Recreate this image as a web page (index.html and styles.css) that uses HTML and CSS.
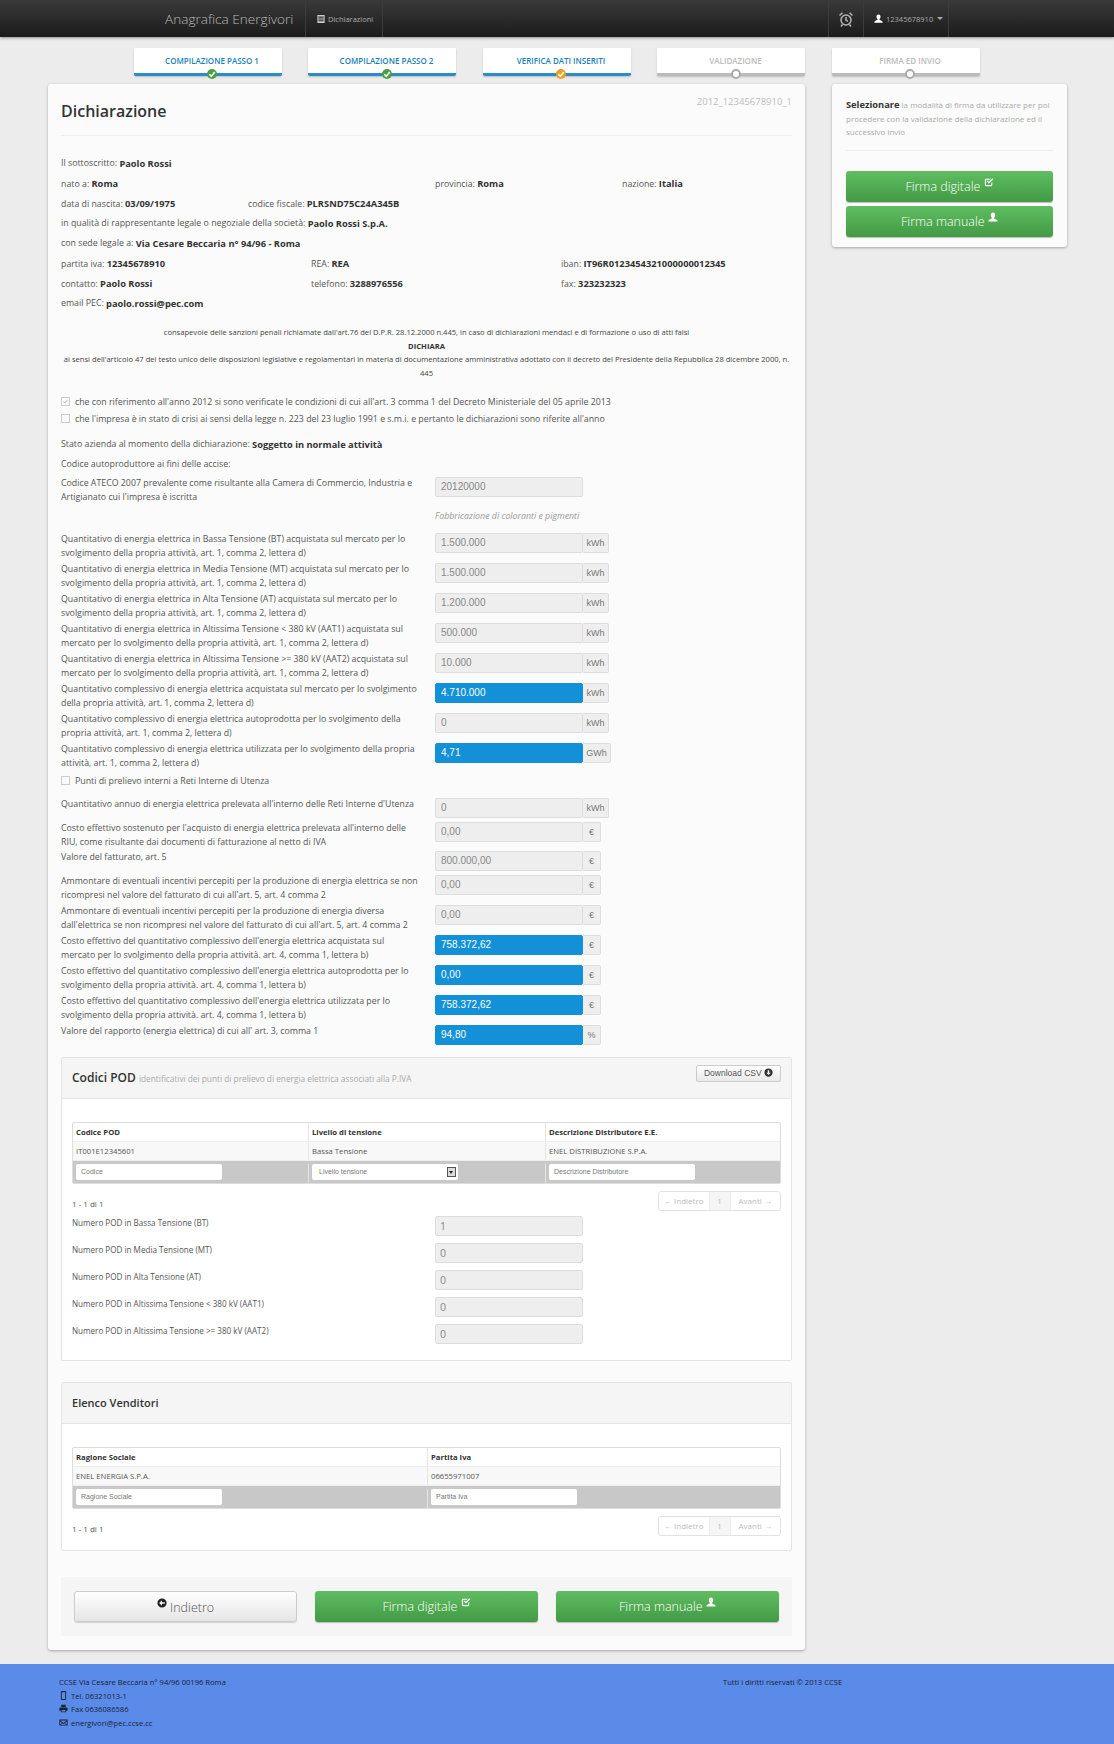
FILE: index.html
```html
<!DOCTYPE html>
<html lang="it">
<head>
    <meta charset="UTF-8">
    <title>Anagrafica Energivori</title>
    <link rel="stylesheet" href="styles.css">
</head>
<body>
    <svg class="sprite" xmlns="http://www.w3.org/2000/svg">
        <symbol id="i-user" viewBox="0 0 12 12"><path d="M6 0.5c1.7 0 2.7 1.2 2.7 3 0 1.4-.6 2.6-1.4 3.2v1l3.2 1.5c.6.3.9.7.9 1.3v1H.5v-1c0-.6.3-1 .9-1.3l3.2-1.5v-1C3.900 6.100 3.300 4.900 3.300 3.500c0-1.800 1-3 2.700-3z"/></symbol>
        <symbol id="i-check" viewBox="0 0 12 12"><path d="M2.500 2h5.500l-1.200 1.200H3a.5.500 0 0 0-.5.500v5.300c0 .3.200.5.500.5h5.300c.3 0 .5-.2.5-.5V7.200L10 6v3.300c0 1-.7 1.700-1.700 1.700H2.700C1.700 11 1 10.300 1 9.300V3.700C1 2.700 1.700 2 2.500 2z"/><path d="M3.400 5.400l1.100-1.100 1.400 1.400L10.100 1.500l1.100 1.100L5.900 7.900z"/></symbol>
        <symbol id="i-down" viewBox="0 0 12 12"><path fill-rule="evenodd" d="M6 .5a5.500 5.500 0 1 1 0 11 5.500 5.500 0 0 1 0-11zM5 3v3.200H3.200L6 9.200l2.800-3H7V3z"/></symbol>
        <symbol id="i-back" viewBox="0 0 12 12"><path fill-rule="evenodd" d="M6 .5a5.500 5.500 0 1 1 0 11 5.500 5.500 0 0 1 0-11zM2.600 6L6 9.200V7h3.400V5H6V2.800z"/></symbol>
        <symbol id="i-phone" viewBox="0 0 8 12"><path fill-rule="evenodd" d="M1.500 0h5c.6 0 1 .4 1 1v10c0 .6-.4 1-1 1h-5c-.6 0-1-.4-1-1V1c0-.6.4-1 1-1zM1.700 1.500v9h4.600v-9z"/></symbol>
        <symbol id="i-print" viewBox="0 0 12 12"><path d="M3 1h6v3H3zM1.500 4.800h9c.5 0 1 .4 1 1V9H9.500v2h-7V9H.5V5.800c0-.6.5-1 1-1zM3.500 8v2h5V8z"/></symbol>
        <symbol id="i-mail" viewBox="0 0 12 12"><path fill-rule="evenodd" d="M.5 2h11v8H.5zM1.800 3.200L6 6.500l4.200-3.300zM1.500 4.500v4.300L4 6.500zM10.500 4.500L8 6.500l2.500 2.300zM4.800 7.100L2.300 9h7.400L7.200 7.100 6 8z"/></symbol>
        <symbol id="i-list" viewBox="0 0 10 12"><path fill-rule="evenodd" d="M.5 1h9v10h-9zM1.700 3v1.300h6.600V3zM1.700 5.300v1.300h6.600V5.300zM1.700 7.600v1.300h6.600V7.600z"/></symbol>
    </svg>

    <header class="topbar">
        <span class="brand">Anagrafica Energivori</span>
        <a class="nav-item nav-main"><svg class="ico-list"><use href="#i-list"/></svg>Dichiarazioni</a>
        <span class="nav-spacer"></span>
        <a class="nav-item nav-clock">
            <svg class="ico-clock" viewBox="0 0 16 16" fill="none" stroke="#b4b4b4" stroke-width="1.500">
                <circle cx="8" cy="9" r="5"/>
                <path d="M8 6v3.200l2 1.200M1.500 4.500L4.500 1.800M14.500 4.500L11.500 1.800M4.500 13.500l-1.500 2M11.500 13.500l1.500 2"/>
            </svg>
        </a>
        <a class="nav-item nav-user"><svg class="ico-sm ico-light"><use href="#i-user"/></svg>12345678910<span class="caret"></span></a>
    </header>

    <div class="page">
        <ul class="steps">
            <li class="step done"><span>COMPILAZIONE PASSO 1</span><i class="dot green"><svg viewBox="0 0 10 10"><path d="M2.300 5.200L4.300 7.200 7.800 3"/></svg></i></li>
            <li class="step done"><span>COMPILAZIONE PASSO 2</span><i class="dot green"><svg viewBox="0 0 10 10"><path d="M2.300 5.200L4.300 7.200 7.800 3"/></svg></i></li>
            <li class="step done active"><span>VERIFICA DATI INSERITI</span><i class="dot orange"><svg viewBox="0 0 10 10"><path d="M2.300 5.200L4.300 7.200 7.800 3"/></svg></i></li>
            <li class="step todo"><span>VALIDAZIONE</span><i class="dot empty"></i></li>
            <li class="step todo"><span>FIRMA ED INVIO</span><i class="dot empty"></i></li>
        </ul>

        <div class="columns">
            <main class="card main-card">
                <div class="title-row">
                    <h1>Dichiarazione</h1>
                    <span class="doc-code">2012_12345678910_1</span>
                </div>

                <div class="info">
                    <div class="info-row">Il sottoscritto:&nbsp;<b>Paolo Rossi</b></div>
                    <div class="info-row">
                        <span class="w-375">nato a:&nbsp;<b>Roma</b></span>
                        <span class="w-187">provincia:&nbsp;<b>Roma</b></span>
                        <span>nazione:&nbsp;<b>Italia</b></span>
                    </div>
                    <div class="info-row">
                        <span class="w-187">data di nascita:&nbsp;<b>03/09/1975</b></span>
                        <span>codice fiscale:&nbsp;<b>PLRSND75C24A345B</b></span>
                    </div>
                    <div class="info-row">in qualità di rappresentante legale o negoziale della società:&nbsp;<b>Paolo Rossi S.p.A.</b></div>
                    <div class="info-row">con sede legale a:&nbsp;<b>Via Cesare Beccaria n° 94/96 - Roma</b></div>
                    <div class="info-row">
                        <span class="w-250">partita iva:&nbsp;<b>12345678910</b></span>
                        <span class="w-250">REA:&nbsp;<b>REA</b></span>
                        <span>iban:&nbsp;<b>IT96R0123454321000000012345</b></span>
                    </div>
                    <div class="info-row">
                        <span class="w-250">contatto:&nbsp;<b>Paolo Rossi</b></span>
                        <span class="w-250">telefono:&nbsp;<b>3288976556</b></span>
                        <span>fax:&nbsp;<b>323232323</b></span>
                    </div>
                    <div class="info-row">email PEC:&nbsp;<b>paolo.rossi@pec.com</b></div>
                </div>

                <div class="notice">
                    <p>consapevole delle sanzioni penali richiamate dall'art.76 del D.P.R. 28.12.2000 n.445, in caso di dichiarazioni mendaci e di formazione o uso di atti falsi</p>
                    <p class="notice-title">DICHIARA</p>
                    <p>ai sensi dell'articolo 47 del testo unico delle disposizioni legislative e regolamentari in materia di documentazione amministrativa adottato con il decreto del Presidente della Repubblica 28 dicembre 2000, n. 445</p>
                </div>

                <label class="check-row"><span class="box checked"><svg viewBox="0 0 10 10"><path d="M2 5l2 2.200L8 2.500"/></svg></span>che con riferimento all'anno 2012 si sono verificate le condizioni di cui all'art. 3 comma 1 del Decreto Ministeriale del 05 aprile 2013</label>
                <label class="check-row"><span class="box"></span>che l'impresa è in stato di crisi ai sensi della legge n. 223 del 23 luglio 1991 e s.m.i. e pertanto le dichiarazioni sono riferite all'anno</label>

                <div class="info-row state-row">Stato azienda al momento della dichiarazione:&nbsp;<b>Soggetto in normale attività</b></div>
                <div class="info-row">Codice autoproduttore ai fini delle accise:</div>

                <div class="field ateco">
                    <span class="field-label">Codice ATECO 2007 prevalente come risultante alla Camera di Commercio, Industria e Artigianato cui l'impresa è iscritta</span>
                    <div class="control"><span class="input">20120000</span></div>
                </div>
                <p class="hint">Fabbricazione di coloranti e pigmenti</p>

                <div class="field">
                    <span class="field-label">Quantitativo di energia elettrica in Bassa Tensione (BT) acquistata sul mercato per lo svolgimento della propria attività, art. 1, comma 2, lettera d)</span>
                    <div class="control"><span class="input">1.500.000</span><span class="addon">kWh</span></div>
                </div>
                <div class="field">
                    <span class="field-label">Quantitativo di energia elettrica in Media Tensione (MT) acquistata sul mercato per lo svolgimento della propria attività, art. 1, comma 2, lettera d)</span>
                    <div class="control"><span class="input">1.500.000</span><span class="addon">kWh</span></div>
                </div>
                <div class="field">
                    <span class="field-label">Quantitativo di energia elettrica in Alta Tensione (AT) acquistata sul mercato per lo svolgimento della propria attività, art. 1, comma 2, lettera d)</span>
                    <div class="control"><span class="input">1.200.000</span><span class="addon">kWh</span></div>
                </div>
                <div class="field">
                    <span class="field-label">Quantitativo di energia elettrica in Altissima Tensione &lt; 380 kV (AAT1) acquistata sul mercato per lo svolgimento della propria attività, art. 1, comma 2, lettera d)</span>
                    <div class="control"><span class="input">500.000</span><span class="addon">kWh</span></div>
                </div>
                <div class="field">
                    <span class="field-label">Quantitativo di energia elettrica in Altissima Tensione &gt;= 380 kV (AAT2) acquistata sul mercato per lo svolgimento della propria attività, art. 1, comma 2, lettera d)</span>
                    <div class="control"><span class="input">10.000</span><span class="addon">kWh</span></div>
                </div>
                <div class="field">
                    <span class="field-label">Quantitativo complessivo di energia elettrica acquistata sul mercato per lo svolgimento della propria attività, art. 1, comma 2, lettera d)</span>
                    <div class="control"><span class="input calc">4.710.000</span><span class="addon">kWh</span></div>
                </div>
                <div class="field">
                    <span class="field-label">Quantitativo complessivo di energia elettrica autoprodotta per lo svolgimento della propria attività, art. 1, comma 2, lettera d)</span>
                    <div class="control"><span class="input">0</span><span class="addon">kWh</span></div>
                </div>
                <div class="field">
                    <span class="field-label">Quantitativo complessivo di energia elettrica utilizzata per lo svolgimento della propria attività, art. 1, comma 2, lettera d)</span>
                    <div class="control"><span class="input calc">4,71</span><span class="addon addon-wide">GWh</span></div>
                </div>

                <label class="check-row riu-row"><span class="box"></span>Punti di prelievo interni a Reti Interne di Utenza</label>

                <div class="field field-short">
                    <span class="field-label">Quantitativo annuo di energia elettrica prelevata all'interno delle Reti Interne d'Utenza</span>
                    <div class="control"><span class="input">0</span><span class="addon">kWh</span></div>
                </div>
                <div class="field field-tight">
                    <span class="field-label">Costo effettivo sostenuto per l'acquisto di energia elettrica prelevata all'interno delle RIU, come risultante dai documenti di fatturazione al netto di IVA</span>
                    <div class="control"><span class="input">0,00</span><span class="addon addon-eur">€</span></div>
                </div>
                <div class="field field-short">
                    <span class="field-label">Valore del fatturato, art. 5</span>
                    <div class="control"><span class="input">800.000,00</span><span class="addon addon-eur">€</span></div>
                </div>
                <div class="field">
                    <span class="field-label">Ammontare di eventuali incentivi percepiti per la produzione di energia elettrica se non ricompresi nel valore del fatturato di cui all'art. 5, art. 4 comma 2</span>
                    <div class="control"><span class="input">0,00</span><span class="addon addon-eur">€</span></div>
                </div>
                <div class="field">
                    <span class="field-label">Ammontare di eventuali incentivi percepiti per la produzione di energia diversa dall'elettrica se non ricompresi nel valore del fatturato di cui all'art. 5, art. 4 comma 2</span>
                    <div class="control"><span class="input">0,00</span><span class="addon addon-eur">€</span></div>
                </div>
                <div class="field">
                    <span class="field-label">Costo effettivo del quantitativo complessivo dell'energia elettrica acquistata sul mercato per lo svolgimento della propria attività. art. 4, comma 1, lettera b)</span>
                    <div class="control"><span class="input calc">758.372,62</span><span class="addon addon-eur">€</span></div>
                </div>
                <div class="field">
                    <span class="field-label">Costo effettivo del quantitativo complessivo dell'energia elettrica autoprodotta per lo svolgimento della propria attività. art. 4, comma 1, lettera b)</span>
                    <div class="control"><span class="input calc">0,00</span><span class="addon addon-eur">€</span></div>
                </div>
                <div class="field">
                    <span class="field-label">Costo effettivo del quantitativo complessivo dell'energia elettrica utilizzata per lo svolgimento della propria attività. art. 4, comma 1, lettera b)</span>
                    <div class="control"><span class="input calc">758.372,62</span><span class="addon addon-eur">€</span></div>
                </div>
                <div class="field field-last">
                    <span class="field-label">Valore del rapporto (energia elettrica) di cui all' art. 3, comma 1</span>
                    <div class="control"><span class="input calc">94,80</span><span class="addon addon-eur">%</span></div>
                </div>

                <section class="panel pod-panel">
                    <div class="panel-head">
                        <h2>Codici POD <small>identificativi dei punti di prelievo di energia elettrica associati alla P.IVA</small></h2>
                        <a class="btn-csv">Download CSV <svg class="ico-sm"><use href="#i-down"/></svg></a>
                    </div>
                    <div class="panel-body">
                        <div class="table pod-table">
                            <div class="tr th"><span>Codice POD</span><span>Livello di tensione</span><span>Descrizione Distributore E.E.</span></div>
                            <div class="tr td"><span>IT001E12345601</span><span>Bassa Tensione</span><span>ENEL DISTRIBUZIONE S.P.A.</span></div>
                            <div class="tr filter">
                                <span><em class="filter-input">Codice</em></span>
                                <span><em class="filter-input filter-select">Livello tensione<i class="select-arrow"></i></em></span>
                                <span><em class="filter-input">Descrizione Distributore</em></span>
                            </div>
                        </div>
                        <div class="pager-row">
                            <span class="count">1 - 1 di 1</span>
                            <div class="pager"><span>← Indietro</span><span class="current">1</span><span>Avanti →</span></div>
                        </div>
                        <div class="pod-fields">
                            <div class="pod-field"><span class="field-label">Numero POD in Bassa Tensione (BT)</span><span class="input input-num">1</span></div>
                            <div class="pod-field"><span class="field-label">Numero POD in Media Tensione (MT)</span><span class="input input-num">0</span></div>
                            <div class="pod-field"><span class="field-label">Numero POD in Alta Tensione (AT)</span><span class="input input-num">0</span></div>
                            <div class="pod-field"><span class="field-label">Numero POD in Altissima Tensione &lt; 380 kV (AAT1)</span><span class="input input-num">0</span></div>
                            <div class="pod-field"><span class="field-label">Numero POD in Altissima Tensione &gt;= 380 kV (AAT2)</span><span class="input input-num">0</span></div>
                        </div>
                    </div>
                </section>

                <section class="panel seller-panel">
                    <div class="panel-head">
                        <h2 class="h-small">Elenco Venditori</h2>
                    </div>
                    <div class="panel-body">
                        <div class="table seller-table">
                            <div class="tr th"><span>Ragione Sociale</span><span>Partita Iva</span></div>
                            <div class="tr td"><span>ENEL ENERGIA S.P.A.</span><span>06655971007</span></div>
                            <div class="tr filter">
                                <span><em class="filter-input">Ragione Sociale</em></span>
                                <span><em class="filter-input">Partita Iva</em></span>
                            </div>
                        </div>
                        <div class="pager-row">
                            <span class="count">1 - 1 di 1</span>
                            <div class="pager"><span>← Indietro</span><span class="current">1</span><span>Avanti →</span></div>
                        </div>
                    </div>
                </section>

                <div class="actions">
                    <a class="btn btn-grey"><svg class="ico-up"><use href="#i-back"/></svg> Indietro</a>
                    <a class="btn btn-green">Firma digitale <svg class="ico-up ico-light"><use href="#i-check"/></svg></a>
                    <a class="btn btn-green">Firma manuale <svg class="ico-up ico-light"><use href="#i-user"/></svg></a>
                </div>
            </main>

            <aside class="card side-card">
                <p class="side-text"><b>Selezionare</b> la modalità di firma da utilizzare per poi procedere con la validazione della dichiarazione ed il successivo invio</p>
                <hr>
                <a class="btn btn-green">Firma digitale <svg class="ico-up ico-light"><use href="#i-check"/></svg></a>
                <a class="btn btn-green">Firma manuale <svg class="ico-up ico-light"><use href="#i-user"/></svg></a>
            </aside>
        </div>
    </div>

    <footer class="footer">
        <div class="footer-left">
            <p>CCSE Via Cesare Beccaria n° 94/96 00196 Roma</p>
            <p><svg class="ico-foot"><use href="#i-phone"/></svg>Tel. 06321013-1</p>
            <p><svg class="ico-foot"><use href="#i-print"/></svg>Fax 0636086586</p>
            <p><svg class="ico-foot"><use href="#i-mail"/></svg>energivori@pec.ccse.cc</p>
        </div>
        <p class="footer-right">Tutti i diritti riservati © 2013 CCSE</p>
    </footer>
</body>
</html>
```

FILE: styles.css
```css
* { box-sizing: border-box; }

body {
    margin: 0;
    background: #ececec;
    font-family: "Open Sans", sans-serif;
    font-size: 8.8px;
    color: #555;
}

.sprite { display: none; }
svg { fill: currentColor; }

/* top bar */
.topbar {
    display: flex;
    align-items: stretch;
    height: 37px;
    padding-left: 165px;
    background: linear-gradient(#3a3a3a, #1b1b1b);
    box-shadow: 0 1px 3px rgba(0, 0, 0, 0.4);
    color: #aaa;
}
.brand {
    width: 140px;
    font-size: 13.600px;
    font-weight: 300;
    line-height: 38px;
    color: #b8b8b8;
}
.nav-item {
    display: flex;
    align-items: center;
    border-left: 1px solid #3c3c3c;
    font-size: 7.500px;
    color: #aaa;
}
.nav-main { width: 78px; padding-left: 11px; border-right: 1px solid #3c3c3c; }
.nav-spacer { width: 445px; }
.nav-clock { width: 35px; justify-content: center; border-right: 0; }
.nav-user { width: 86px; padding-left: 10px; border-right: 1px solid #3c3c3c; }
.ico-list { width: 8px; height: 10px; margin-right: 3px; color: #ccc; }
.ico-clock { width: 16px; height: 16px; fill: none; }
.ico-sm { width: 9px; height: 9px; }
.ico-light { color: #fff; }
.nav-user .ico-sm { margin-right: 3px; }
.caret {
    margin-left: 4px;
    border-top: 3px solid #aaa;
    border-left: 3px solid transparent;
    border-right: 3px solid transparent;
}

/* wizard */
.page { padding: 11px 47px 0 48px; }
.steps {
    display: flex;
    gap: 26.500px;
    margin: 0 0 8px 85.500px;
    padding: 0;
    list-style: none;
}
.step {
    position: relative;
    width: 148px;
    height: 28px;
    padding: 7px 0 0 9px;
    background: #fff;
    border-bottom: 3px solid #2a8cc8;
    border-radius: 1px 1px 2px 2px;
    box-shadow: 0 1px 2px rgba(0, 0, 0, 0.2);
    text-align: center;
    font-size: 8px;
    font-weight: 600;
    line-height: 11px;
    color: #1b7fb8;
}
.step.todo { border-bottom-color: #bbb; color: #bbb; }
.dot {
    position: absolute;
    left: calc(50% + 4.500px);
    bottom: -6px;
    width: 10px;
    height: 10px;
    margin-left: -5px;
    border-radius: 50%;
}
.dot svg { display: block; fill: none; stroke: #fff; stroke-width: 1.600; }
.dot.green { background: #4a9f45; }
.dot.orange { background: #ef9d1e; }
.dot.empty { background: #fff; border: 2px solid #aaa; }

/* layout */
.columns {
    display: grid;
    grid-template-columns: 757px 235px;
    column-gap: 27px;
    align-items: start;
}
.card {
    background: #fbfbfb;
    border-radius: 3px;
    box-shadow: 0 1px 3px rgba(0, 0, 0, 0.3);
}
.main-card { padding: 0 13px 14px; }

.title-row {
    display: flex;
    justify-content: space-between;
    height: 52px;
    border-bottom: 1px solid #eee;
}
h1 {
    margin: 14px 0 0;
    font-size: 16px;
    font-weight: 600;
    line-height: 26px;
    color: #333;
}
.doc-code {
    margin-top: 11px;
    font-size: 9.500px;
    line-height: 14px;
    color: #bbb;
}

/* dati anagrafici */
.info { margin-top: 17px; }
.info-row {
    display: flex;
    height: 20px;
    align-items: center;
    white-space: pre-wrap;
}
.info-row > span { white-space: pre-wrap; }
.w-375 { width: 374px; }
.w-187 { width: 187px; }
.w-250 { width: 250px; }
b { font-size: 9.300px; font-weight: 700; color: #333; }

.notice { margin: 13px 0; text-align: center; font-size: 7.600px; line-height: 13.500px; color: #444; }
.notice p { margin: 0; }
.notice-title { font-weight: 700; color: #333; }

.check-row {
    display: flex;
    align-items: center;
    height: 17px;
    gap: 5px;
}
.box {
    flex: none;
    width: 9px;
    height: 9px;
    background: #fafafa;
    border: 1px solid #ccc;
}
.box svg { display: block; width: 7px; height: 7px; fill: none; stroke: #aaa; stroke-width: 1.300; }
.state-row { margin-top: 7px; }
.riu-row { margin-top: -1px; margin-bottom: 9px; }

/* campi */
.field {
    display: flex;
    align-items: flex-start;
    height: 30px;
}
.field-short { height: 24px; }
.field-tight { height: 29px; }
.field-last { height: 32px; }
.ateco { height: 32px; margin-top: 3px; }
.field-label {
    flex: none;
    width: 374px;
    padding-right: 16px;
    line-height: 13.500px;
}
.control { display: flex; }
.input {
    display: block;
    width: 148px;
    height: 20px;
    padding: 0 5px;
    background: #eee;
    border: 1px solid #ddd;
    border-radius: 2px;
    font-family: "Liberation Sans", Arial, sans-serif;
    font-size: 10px;
    line-height: 18px;
    color: #888;
}
.input.calc { background: #1290d8; border-color: #1290d8; color: #fff; }
.addon {
    width: 26px;
    height: 20px;
    background: #eee;
    border: 1px solid #ddd;
    border-left: 0;
    border-radius: 0 2px 2px 0;
    text-align: center;
    font-family: "Liberation Sans", Arial, sans-serif;
    font-size: 9px;
    line-height: 18px;
    color: #777;
}
.addon-wide { width: 28px; }
.addon-eur { width: 18px; }
.hint {
    margin: 0 0 10px 374px;
    height: 14px;
    font-style: italic;
    line-height: 14px;
    color: #999;
}

/* pannelli */
.panel {
    background: #fff;
    border: 1px solid #e4e4e4;
    border-radius: 2px;
}
.pod-panel { height: 304px; }
.seller-panel { height: 169px; margin-top: 21px; }
.panel-head {
    display: flex;
    justify-content: space-between;
    height: 41px;
    padding: 7px 10px;
    background: #f5f5f5;
    border-bottom: 1px solid #e4e4e4;
}
h2 {
    margin: 0;
    font-size: 12px;
    font-weight: 600;
    line-height: 25px;
    color: #333;
}
h2.h-small { font-size: 11px; }
h2 small { font-size: 8.300px; font-weight: 400; color: #aaa; }
.btn-csv {
    height: 17px;
    padding: 0 7px;
    background: linear-gradient(#fff, #e9e9e9);
    border: 1px solid #ccc;
    border-radius: 2px;
    font-family: "Liberation Sans", Arial, sans-serif;
    font-size: 8.500px;
    line-height: 15px;
    color: #555;
}
.btn-csv svg { vertical-align: -1px; color: #333; }
.panel-body { padding: 23px 10px 0; }

.table { border: 1px solid #ddd; border-radius: 2px; font-size: 7.700px; }
.tr { display: grid; }
.pod-table .tr { grid-template-columns: 235px 237px 1fr; }
.seller-table .tr { grid-template-columns: 354px 1fr; }
.tr > span { padding: 0 3px; border-left: 1px solid #e6e6e6; }
.tr > span:first-child { border-left: 0; }
.th, .td { height: 19px; line-height: 18px; border-bottom: 1px solid #eee; }
.th { font-weight: 700; color: #333; }
.td { background: #f8f8f8; }
.filter { height: 22px; background: #c8c8c8; padding-top: 3px; }
.filter-input {
    position: relative;
    display: block;
    width: 146px;
    height: 16px;
    padding-left: 5px;
    background: #fff;
    border-radius: 2px;
    font-family: "Liberation Sans", Arial, sans-serif;
    font-size: 7px;
    font-style: normal;
    line-height: 16px;
    color: #777;
}
.filter-select { padding-left: 7px; }
.select-arrow {
    position: absolute;
    right: 2px;
    top: 3px;
    width: 9px;
    height: 10px;
    background: #ddd;
    border: 1px solid #555;
}
.select-arrow::after {
    content: "";
    position: absolute;
    left: 1px;
    top: 3px;
    border-top: 3px solid #222;
    border-left: 2.500px solid transparent;
    border-right: 2.500px solid transparent;
}
.pager-row {
    display: flex;
    justify-content: space-between;
    align-items: center;
    height: 20px;
    margin-top: 7px;
}
.count { padding-top: 4px; font-size: 8px; }
.pager {
    display: flex;
    width: 123px;
    height: 20px;
    border: 1px solid #e2e2e2;
    border-radius: 3px;
    background: #fff;
    font-size: 8px;
    line-height: 18px;
    color: #bbb;
}
.pager span { flex: 1; padding: 0 2px; text-align: center; white-space: nowrap; }
.pager .current { flex: none; width: 22px; background: #f5f5f5; border-left: 1px solid #eee; border-right: 1px solid #eee; }
.pod-fields { margin-top: 5px; }
.pod-field {
    display: flex;
    height: 27px;
    font-size: 8.100px;
}
.pod-field .field-label { width: 363px; }
.input-num { font-family: "Open Sans", sans-serif; font-size: 10.500px; padding-left: 4px; }

/* azioni */
.actions {
    display: flex;
    justify-content: space-between;
    height: 59px;
    margin-top: 26px;
    padding: 14px 13px;
    background: #f5f5f5;
}
.actions .btn { width: 223px; }
.btn {
    display: block;
    height: 31px;
    border-radius: 3px;
    text-align: center;
    font-size: 12.500px;
    font-weight: 300;
    line-height: 32px;
}
.btn-green {
    background: linear-gradient(#5fbd60, #439a45);
    box-shadow: 0 1px 1px rgba(0, 0, 0, 0.25);
    color: #fff;
}
.btn-grey {
    background: linear-gradient(#fff, #e5e5e5);
    border: 1px solid #ccc;
    box-shadow: 0 1px 1px rgba(0, 0, 0, 0.15);
    color: #555;
}
.ico-up { width: 10px; height: 10px; vertical-align: 4px; }
.btn-grey .ico-up { color: #222; }

/* colonna firma */
.side-card { padding: 14px 14px 10px; }
.side-text { margin: 0; font-size: 8px; line-height: 13.500px; color: #aaa; }
.side-text b { font-size: 9.300px; }
.side-card hr { margin: 11px 0 20px; border: 0; border-top: 1px solid #eee; }
.side-card .btn + .btn { margin-top: 4px; }

/* footer */
.footer {
    display: flex;
    height: 80px;
    margin-top: 14px;
    padding: 12px 0 0 59px;
    background: #5b8be9;
    font-size: 7.600px;
    line-height: 13.500px;
    color: #1a2333;
}
.footer p { margin: 0; }
.footer-left { width: 664px; }
.ico-foot { width: 9px; height: 9px; margin-right: 3px; vertical-align: -1px; }
```
